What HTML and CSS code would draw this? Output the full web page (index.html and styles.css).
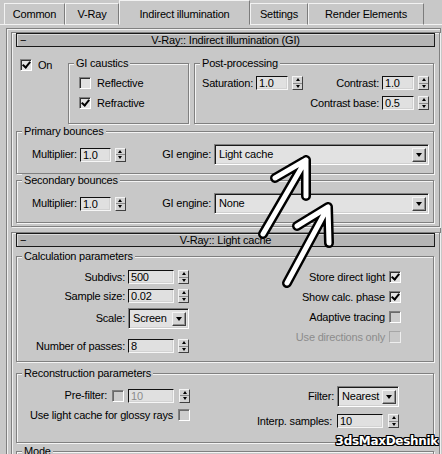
FILE: index.html
```html
<!DOCTYPE html>
<html lang="en">
<head>
<meta charset="UTF-8">
<title>V-Ray: Indirect illumination</title>
<link rel="stylesheet" href="styles.css">
</head>
<body>

<div class="tabs">
    <div class="tab-edge"></div>
    <div class="tab w-common">Common</div>
    <div class="tab w-vray">V-Ray</div>
    <div class="tab active w-gi">Indirect illumination</div>
    <div class="tab w-settings">Settings</div>
    <div class="tab w-elements">Render Elements</div>
    <div class="tab-fill"></div>
</div>

<div class="panel">

    <div class="rollout">
        <div class="rollout-title"><span class="minus">&minus;</span><span>V-Ray:: Indirect illumination (GI)</span><span></span></div>

        <div class="gi-top">
            <div class="check on-check"><span class="cb checked"></span>On</div>

            <fieldset class="group">
                <legend>GI caustics</legend>
                <div class="stack">
                    <div class="check"><span class="cb"></span>Reflective</div>
                    <div class="check"><span class="cb checked"></span>Refractive</div>
                </div>
            </fieldset>

            <fieldset class="group post">
                <legend>Post-processing</legend>
                <div class="post-rows">
                    <div class="prow split">
                        <div class="num"><span class="lbl">Saturation:</span><span class="field w32">1.0</span><span class="spin"><i class="up"></i><i class="dn"></i></span></div>
                        <div class="num"><span class="lbl">Contrast:</span><span class="field w32">1.0</span><span class="spin"><i class="up"></i><i class="dn"></i></span></div>
                    </div>
                    <div class="prow end">
                        <div class="num"><span class="lbl">Contrast base:</span><span class="field w32">0.5</span><span class="spin"><i class="up"></i><i class="dn"></i></span></div>
                    </div>
                </div>
            </fieldset>
        </div>

        <fieldset class="group bounces first">
            <legend>Primary bounces</legend>
            <div class="bounce-row">
                <div class="num"><span class="lbl">Multiplier:</span><span class="field w31">1.0</span><span class="spin"><i class="up"></i><i class="dn"></i></span></div>
                <div class="engine"><span class="lbl">GI engine:</span><span class="select wide"><span class="val">Light cache</span><span class="drop"></span></span></div>
            </div>
        </fieldset>

        <fieldset class="group bounces">
            <legend>Secondary bounces</legend>
            <div class="bounce-row">
                <div class="num"><span class="lbl">Multiplier:</span><span class="field w31">1.0</span><span class="spin"><i class="up"></i><i class="dn"></i></span></div>
                <div class="engine"><span class="lbl">GI engine:</span><span class="select wide"><span class="val">None</span><span class="drop"></span></span></div>
            </div>
        </fieldset>
    </div>

    <div class="rollout second">
        <div class="rollout-title"><span class="minus">&minus;</span><span>V-Ray:: Light cache</span><span></span></div>

        <fieldset class="group calc-group">
            <legend>Calculation parameters</legend>
            <div class="calc">
                <div class="calc-left">
                    <div class="crow"><span class="clbl">Subdivs:</span><span class="field w46">500</span><span class="spin"><i class="up"></i><i class="dn"></i></span></div>
                    <div class="crow"><span class="clbl">Sample size:</span><span class="field w46">0.02</span><span class="spin"><i class="up"></i><i class="dn"></i></span></div>
                    <div class="crow tall"><span class="clbl">Scale:</span><span class="select scale"><span class="val">Screen</span><span class="drop"></span></span></div>
                    <div class="crow passes"><span class="clbl">Number of passes:</span><span class="field w46">8</span><span class="spin"><i class="up"></i><i class="dn"></i></span></div>
                </div>
                <div class="calc-right">
                    <div class="check rev">Store direct light<span class="cb checked"></span></div>
                    <div class="check rev">Show calc. phase<span class="cb checked"></span></div>
                    <div class="check rev">Adaptive tracing<span class="cb gray"></span></div>
                    <div class="check rev dim">Use directions only<span class="cb disabled"></span></div>
                </div>
            </div>
        </fieldset>

        <fieldset class="group recon-group">
            <legend>Reconstruction parameters</legend>
            <div class="recon">
                <div class="recon-left">
                    <div class="rrow">Pre-filter:<span class="cb gray"></span><span class="field w46 dim">10</span><span class="spin"><i class="up"></i><i class="dn"></i></span></div>
                    <div class="rrow second-row">Use light cache for glossy rays<span class="cb gray"></span></div>
                </div>
                <div class="recon-right">
                    <div class="rrow tall">Filter:<span class="select filter"><span class="val">Nearest</span><span class="drop"></span></span></div>
                    <div class="rrow interp">Interp. samples:<span class="field w46">10</span><span class="spin"><i class="up"></i><i class="dn"></i></span></div>
                </div>
            </div>
        </fieldset>

        <fieldset class="group mode-group">
            <legend>Mode</legend>
        </fieldset>
    </div>

</div>

<svg class="arrows" width="442" height="454" viewBox="0 0 442 454">
    <g fill="none" stroke="#000" stroke-width="10" stroke-linecap="round" stroke-linejoin="round">
        <path d="M263 234 L306 160 M275 178 L306 160 L306 196"/>
        <path d="M287 283 L328 207 M297 226 L328 207 L329 243"/>
    </g>
    <g fill="none" stroke="#fff" stroke-width="5" stroke-linecap="round" stroke-linejoin="round">
        <path d="M263 234 L306 160 M275 178 L306 160 L306 196"/>
        <path d="M287 283 L328 207 M297 226 L328 207 L329 243"/>
    </g>
</svg>

<div class="mark">3dsMaxDeshnik</div>

</body>
</html>
```

FILE: styles.css
```css
body {
    margin: 0;
    width: 442px;
    height: 454px;
    overflow: hidden;
    position: relative;
    background: #c8c8c8;
    font-family: "Liberation Sans", Arial, sans-serif;
    font-size: 11px;
    line-height: 13px;
    letter-spacing: -0.2px;
    color: #000;
}

/* tab strip */
.tabs {
    display: flex;
    align-items: flex-end;
    height: 25px;
}
.tab-edge, .tab-fill {
    height: 22px;
    box-sizing: border-box;
    border-bottom: 1px solid #f2f2f2;
}
.tab-edge { width: 4px; }
.tab-fill { flex: 1; }
.tab {
    box-sizing: border-box;
    height: 22px;
    border: 1px solid #f2f2f2;
    border-right-color: #7c7c7c;
    display: flex;
    align-items: center;
    justify-content: center;
}
.tab.active {
    height: 25px;
    padding-top: 3px;
    border-bottom-color: #c8c8c8;
}
.w-common { width: 61px; }
.w-vray { width: 54px; }
.w-gi { width: 131px; }
.w-settings { width: 58px; }
.w-elements { width: 116px; }

/* rollout panel */
.panel {
    width: 429px;
    margin: 3px 0 0 6px;
    padding: 3px 0 0 4px;
    border-top: 1px solid #808080;
    border-left: 1px solid #808080;
    border-right: 1px solid #808080;
    box-shadow: inset 1px 1px 0 #f0f0f0;
}
.rollout {
    border: 1px solid #808080;
    box-shadow: inset 1px 1px 0 #f0f0f0, 1px 1px 0 #f0f0f0;
    padding: 0 4px 3px 4px;
}
.rollout.second {
    margin-top: 5px;
}
.rollout-title {
    box-sizing: border-box;
    height: 14px;
    border: 1px solid #1a1a1a;
    background: #b5b5b5;
    box-shadow: inset 1px 1px 0 #dcdcdc;
    display: grid;
    grid-template-columns: 1fr auto 1fr;
    align-items: center;
    line-height: 12px;
}
.minus {
    padding-left: 3px;
}

/* group boxes */
.group {
    margin: 0 1px 0 0;
    padding: 0 4px 0 5px;
    min-width: 0;
    border: 1px solid #808080;
    box-shadow: inset 1px 1px 0 #f4f4f4, 1px 1px 0 #f4f4f4;
}
legend {
    padding: 0 2px;
    line-height: 13px;
    background: #c8c8c8;
}

.gi-top {
    display: grid;
    grid-template-columns: 52px 121px 1fr;
    margin: 10px 1px 0 0;
    align-items: start;
}
.gi-top .group { margin: 0; }
.gi-top .post { margin-left: 5px; }

.check {
    display: flex;
    align-items: center;
    gap: 6px;
    height: 20px;
}
.on-check {
    height: 12px;
    padding: 2px 0 0 4px;
}
.stack {
    padding: 3px 0 10px 5px;
}
.check.rev {
    justify-content: flex-end;
    gap: 4px;
}
.dim { color: #8c8c8c; }

/* checkbox */
.cb {
    box-sizing: border-box;
    width: 12px;
    height: 12px;
    flex: none;
    border: 1px solid #fff;
    border-top-color: #808080;
    border-left-color: #808080;
    box-shadow: inset 1px 1px 0 #303030;
    background: #e2e2e2;
    display: flex;
    align-items: center;
    justify-content: center;
}
.cb.checked::after {
    content: "";
    width: 3px;
    height: 6px;
    margin: -2px 0 0 1px;
    border: solid #000;
    border-width: 0 2px 2px 0;
    transform: rotate(40deg);
}
.cb.gray { background: #cdcdcd; box-shadow: inset 1px 1px 0 #6a6a6a; }
.cb.disabled {
    background: #c8c8c8;
    border-color: #a6a6a6 #eeeeee #eeeeee #a6a6a6;
    box-shadow: none;
}

/* number fields + spinners */
.num {
    display: flex;
    align-items: center;
}
.lbl { margin-right: 3px; }
.field {
    box-sizing: border-box;
    height: 14px;
    padding-left: 2px;
    line-height: 12px;
    background: #e0e0e0;
    border: 1px solid #f6f6f6;
    border-top-color: #111;
    border-left-color: #111;
    box-shadow: inset -1px -1px 0 #d2d2d2;
}
.w31 { width: 31px; }
.w32 { width: 32px; }
.w46 { width: 46px; }
.spin {
    box-sizing: border-box;
    width: 11px;
    height: 14px;
    margin-left: 4px;
    display: flex;
    flex-direction: column;
    border: 1px solid #404040;
    border-top-color: #f4f4f4;
    border-left-color: #f4f4f4;
    background: #d2d2d2;
}
.spin i {
    flex: 1;
    display: flex;
    align-items: center;
    justify-content: center;
}
.spin i::before {
    content: "";
    border-left: 2.5px solid transparent;
    border-right: 2.5px solid transparent;
}
.spin .up { border-bottom: 1px solid #8a8a8a; }
.spin .up::before { border-bottom: 3px solid #000; }
.spin .dn::before { border-top: 3px solid #000; }

/* drop-down lists */
.select {
    box-sizing: border-box;
    height: 21px;
    display: flex;
    align-items: center;
    padding: 0 2px 0 4px;
    background: #e2e2e2;
    border: 1px solid #fff;
    border-top-color: #808080;
    border-left-color: #808080;
    box-shadow: inset 1px 1px 0 #1a1a1a, inset -1px -1px 0 #cfcfcf;
}
.select .val { flex: 1; }
.drop {
    box-sizing: border-box;
    width: 14px;
    height: 14px;
    display: flex;
    align-items: center;
    justify-content: center;
    border: 1px solid #404040;
    border-top-color: #f4f4f4;
    border-left-color: #f4f4f4;
    box-shadow: inset -1px -1px 0 #909090;
    background: #d4d4d4;
}
.drop::before {
    content: "";
    border-left: 3.5px solid transparent;
    border-right: 3.5px solid transparent;
    border-top: 4px solid #000;
}
.wide { width: 215px; }
.scale { width: 61px; }
.filter { width: 62px; margin-left: 3px; }

/* post-processing */
.post-rows { padding: 3px 0 10px 2px; }
.prow {
    display: flex;
    align-items: center;
    height: 20px;
}
.prow.split { justify-content: space-between; }
.prow.end { justify-content: flex-end; }

/* bounces */
.group.bounces { padding-bottom: 8px; }
.group.first { margin-top: 1px; }
.bounce-row {
    display: flex;
    align-items: center;
    height: 21px;
    padding-top: 6px;
}
.bounce-row .num { margin-left: 10px; }
.engine {
    margin-left: auto;
    display: flex;
    align-items: center;
}

/* light cache: calculation */
.group.calc-group { margin-top: 3px; }
.calc {
    display: flex;
    justify-content: space-between;
    padding-bottom: 8px;
}
.calc-left { padding-top: 2px; }
.crow {
    display: flex;
    align-items: center;
    height: 14px;
    margin-top: 5px;
}
.crow.tall { height: 21px; }
.crow.passes { margin-top: 10px; }
.clbl {
    width: 103px;
    margin-right: 3px;
    text-align: right;
}
.calc-right {
    padding-top: 4px;
    margin-right: 28px;
}

/* light cache: reconstruction */
.group.recon-group { margin-top: 5px; }
.recon {
    display: flex;
    justify-content: space-between;
    padding-bottom: 14px;
}
.recon-left {
    width: 168px;
    padding-top: 8px;
    display: flex;
    flex-direction: column;
    align-items: flex-end;
}
.recon-right {
    padding-top: 6px;
    margin-right: 30px;
    display: flex;
    flex-direction: column;
    align-items: flex-end;
}
.rrow {
    display: flex;
    align-items: center;
    height: 15px;
}
.rrow .cb { margin-left: 5px; }
.rrow .cb + .field { margin-left: 4px; }
.rrow.second-row { height: 14px; margin-top: 5px; }
.rrow.tall { height: 21px; }
.rrow.interp { height: 14px; margin-top: 7px; }
.rrow.interp .field { margin-left: 5px; }
.rrow .spin { margin-left: 5px; }

.group.mode-group {
    margin-top: 2px;
    height: 40px;
}

/* overlays */
.arrows {
    position: absolute;
    top: 0;
    left: 0;
    pointer-events: none;
}
.mark {
    position: absolute;
    right: 4px;
    top: 435px;
    font-family: "DejaVu Sans", sans-serif;
    font-weight: bold;
    font-size: 12px;
    letter-spacing: -0.3px;
    color: #fff;
    text-shadow: 1px 0 #000, -1px 0 #000, 0 1px #000, 0 -1px #000,
                 1px 1px #000, -1px -1px #000, 1px -1px #000, -1px 1px #000;
}
```
